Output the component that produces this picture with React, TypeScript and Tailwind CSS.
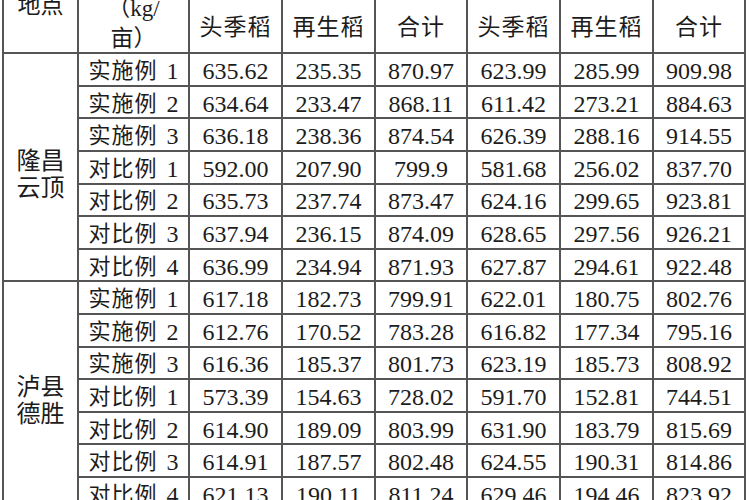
import React from 'react';

type Row = { label: string; n: string; values: string[] };

const groups: { name: string[]; rows: Row[]; pad: string }[] = [
  {
    name: ['隆昌', '云顶'],
    pad: 'pt-[16px]',
    rows: [
      { label: '实施例', n: '1', values: ['635.62', '235.35', '870.97', '623.99', '285.99', '909.98'] },
      { label: '实施例', n: '2', values: ['634.64', '233.47', '868.11', '611.42', '273.21', '884.63'] },
      { label: '实施例', n: '3', values: ['636.18', '238.36', '874.54', '626.39', '288.16', '914.55'] },
      { label: '对比例', n: '1', values: ['592.00', '207.90', '799.9', '581.68', '256.02', '837.70'] },
      { label: '对比例', n: '2', values: ['635.73', '237.74', '873.47', '624.16', '299.65', '923.81'] },
      { label: '对比例', n: '3', values: ['637.94', '236.15', '874.09', '628.65', '297.56', '926.21'] },
      { label: '对比例', n: '4', values: ['636.99', '234.94', '871.93', '627.87', '294.61', '922.48'] },
    ],
  },
  {
    name: ['泸县', '德胜'],
    pad: 'pt-[10px]',
    rows: [
      { label: '实施例', n: '1', values: ['617.18', '182.73', '799.91', '622.01', '180.75', '802.76'] },
      { label: '实施例', n: '2', values: ['612.76', '170.52', '783.28', '616.82', '177.34', '795.16'] },
      { label: '实施例', n: '3', values: ['616.36', '185.37', '801.73', '623.19', '185.73', '808.92'] },
      { label: '对比例', n: '1', values: ['573.39', '154.63', '728.02', '591.70', '152.81', '744.51'] },
      { label: '对比例', n: '2', values: ['614.90', '189.09', '803.99', '631.90', '183.79', '815.69'] },
      { label: '对比例', n: '3', values: ['614.91', '187.57', '802.48', '624.55', '190.31', '814.86'] },
      { label: '对比例', n: '4', values: ['621.13', '190.11', '811.24', '629.46', '194.46', '823.92'] },
    ],
  },
];

const heads = ['头季稻', '再生稻', '合计', '头季稻', '再生稻', '合计'];

const font = { fontFamily: '"Liberation Serif", "Noto Sans CJK SC", serif' };

export default function App() {
  return (
    <div className="w-[750px] h-[500px] overflow-hidden bg-white text-[#1c1c1c]" style={font}>
      <div className="ml-[2px] -mt-[20px] w-[744px] px-[2px] bg-[#555555] grid gap-[2px] grid-cols-[73px_109px_91px_91px_90px_91px_91px_90px] grid-rows-[72.3px_repeat(14,30.6px)]">
        {/* header */}
        <div className="bg-white flex justify-center pt-[11px] text-[23px] leading-[30px]">地点</div>
        <div className="bg-white flex flex-col items-center pt-[14px] text-[23px] leading-[30px]">
          <span>（kg/</span>
          <span>亩）</span>
        </div>
        {heads.map((h, i) => (
          <div key={i} className="bg-white flex justify-center pt-[33px] text-[23px] leading-[30px] tracking-[1px]">
            {h}
          </div>
        ))}

        {groups.map((g, gi) => (
          <React.Fragment key={gi}>
            <div className={`bg-white row-span-7 flex flex-col items-center justify-center text-[24px] leading-[27px] ${g.pad}`}>
              {g.name.map((s) => (
                <span key={s}>{s}</span>
              ))}
            </div>
            {g.rows.map((r, ri) => (
              <React.Fragment key={ri}>
                <div className={`bg-white flex items-center justify-center text-[24px] leading-none pt-[3px] ${ri === 0 ? 'col-start-2' : ''}`}>
                  <span className="text-[22px] tracking-[1px]">{r.label}</span>
                  <span className="ml-[9px]">{r.n}</span>
                </div>
                {r.values.map((v, vi) => (
                  <div key={vi} className="bg-white flex items-center justify-center text-[24px] leading-none pt-[3px]">
                    {v}
                  </div>
                ))}
              </React.Fragment>
            ))}
          </React.Fragment>
        ))}
      </div>
    </div>
  );
}
